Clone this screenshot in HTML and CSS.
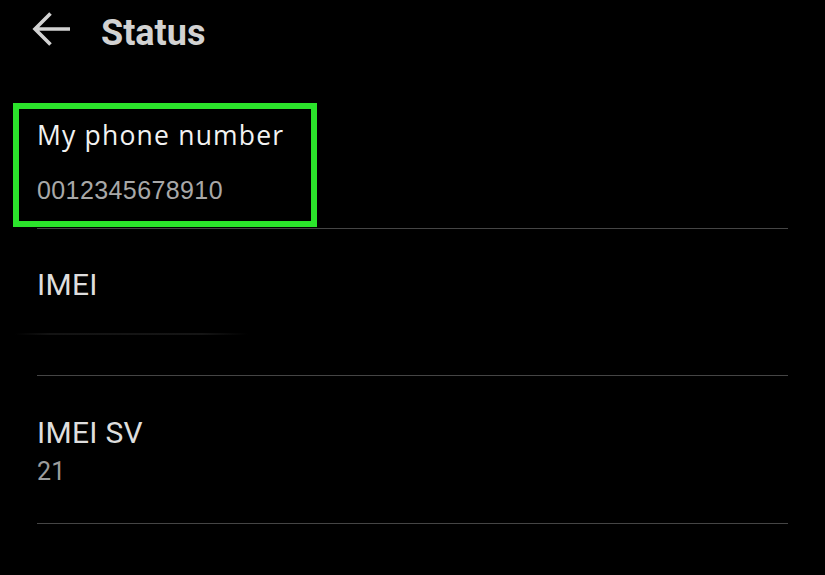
FILE: index.html
```html
<!DOCTYPE html>
<html lang="en">

<head>
    <meta charset="UTF-8">
    <meta name="viewport" content="width=device-width, initial-scale=1.0">
    <title>Status</title>
    <link rel="stylesheet" href="styles.css">
</head>

<body>
    <!-- Top bar -->
    <div class="topbar">
        <svg class="back" width="38" height="36" viewBox="0 0 38 36">
            <path d="M38 18 H3 M18.5 2.5 L3 18 L18.5 33.5" fill="none" stroke="#d2d2d2" stroke-width="3.6"/>
        </svg>
        <h1 class="title">Status</h1>
    </div>

    <div class="list">
        <!-- Phone number, highlighted -->
        <div class="item item-phone">
            <p class="item-label">My phone number</p>
            <p class="item-value">0012345678910</p>
            <span class="highlight"></span>
        </div>

        <div class="item">
            <p class="item-label roboto">IMEI</p>
            <div class="redacted"></div>
        </div>

        <div class="item">
            <p class="item-label roboto">IMEI SV</p>
            <p class="item-value roboto small">21</p>
        </div>
    </div>
</body>

</html>
```

FILE: styles.css
```css
/* Resetting default margin and padding */
* {
    margin: 0;
    padding: 0;
    box-sizing: border-box;
}

body {
    width: 825px;
    height: 575px;
    background: #000;
    overflow: hidden;
    font-family: Roboto, "Noto Sans", sans-serif;
}

/* Top bar */
.topbar {
    height: 82px;
    display: flex;
    align-items: flex-start;
    padding: 11px 0 0 32px;
}

.back {
    display: block;
    flex: none;
}

.title {
    margin: 4px 0 0 31px;
    font-family: Roboto, sans-serif;
    font-weight: 700;
    font-size: 36px;
    line-height: 36px;
    color: #d2d2d2;
}

/* List rows */
.list {
    padding: 0 37px;
}

.item {
    height: 147px;
    border-bottom: 1px solid #454545;
    padding-top: 38px;
    position: relative;
}

.item + .item + .item {
    height: 148px;
    padding-top: 39px;
}

.item-phone {
    padding-top: 35px;
}

.item-label {
    font-family: "Open Sans", sans-serif;
    font-size: 26.5px;
    line-height: 36px;
    color: #f2f2f2;
    letter-spacing: 1.2px;
}

.item-value {
    margin-top: 22px;
    font-family: "Liberation Sans", Arial, sans-serif;
    font-size: 25px;
    line-height: 30px;
    color: #a8a8a8;
    letter-spacing: 0.4px;
}

.roboto {
    font-family: Roboto, sans-serif;
    font-size: 30px;
    letter-spacing: 0.3px;
    color: #dedede;
}

.small {
    margin-top: 6px;
    font-size: 25px;
    color: #9c9c9c;
}

/* Blurred out IMEI */
.redacted {
    margin: 30px 0 0 -22px;
    width: 233px;
    height: 2px;
    border-radius: 2px;
    background: linear-gradient(90deg, transparent, #131313 15%, #151515 80%, transparent);
}

/* Green annotation box */
.highlight {
    position: absolute;
    left: -24px;
    top: 21px;
    width: 304px;
    height: 124px;
    border: 6px solid #2be42b;
}
```
